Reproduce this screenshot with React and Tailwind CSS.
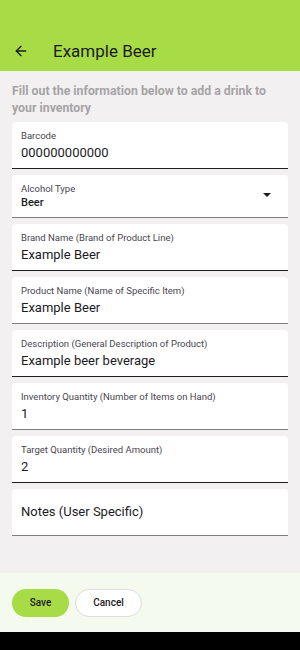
import { ArrowLeft } from "lucide-react";

const FONT = { fontFamily: "Roboto, 'Noto Sans', sans-serif" };

const fields = [
  { label: "Barcode", value: "000000000000", dark: true },
  { label: "Alcohol Type", value: "Beer", select: true },
  { label: "Brand Name (Brand of Product Line)", value: "Example Beer", dark: true },
  { label: "Product Name (Name of Specific Item)", value: "Example Beer" },
  { label: "Description (General Description of Product)", value: "Example beer beverage", dark: true },
  { label: "Inventory Quantity (Number of Items on Hand)", value: "1" },
  { label: "Target Quantity (Desired Amount)", value: "2", dark: true },
];

const Field = ({ label, value, dark, select }) => (
  <div
    className={`bg-white rounded-t-[4px] px-[9px] flex ${select ? "h-[43px]" : "h-[47px]"} ${
      dark ? "border-b border-[#1e1e1e]" : "border-b border-[#7d7d7d]"
    }`}
  >
    <div className="flex-1 flex flex-col pt-[8px]">
      <span className="text-[9.5px] leading-[12px] text-[#49454f]">{label}</span>
      {select ? (
        <span className="text-[11px] leading-[14px] font-medium text-[#1c1b1f] mt-[1px]">{value}</span>
      ) : (
        <span className="text-[13px] leading-[16px] text-[#1c1b1f] mt-[3px]">{value}</span>
      )}
    </div>
    {select && (
      <div className="flex items-center pr-[8px] pb-[2px]">
        <svg width="8" height="4" viewBox="0 0 8 4">
          <path d="M0 0 L8 0 L4 4 Z" fill="#1c1b1f" />
        </svg>
      </div>
    )}
  </div>
);

export default function App() {
  return (
    <div className="h-[650px] w-full flex flex-col bg-[#f2f0f1]" style={FONT}>
      <header className="h-[71px] bg-[#a8dc47] flex items-end pb-[8px] px-[13px]">
        <ArrowLeft className="w-[16px] h-[16px] text-[#1c1b1f] mb-[4px]" strokeWidth={2} />
        <h1 className="text-[17px] leading-[24px] text-[#1c1b1f] ml-[24px]">Example Beer</h1>
      </header>

      <main className="flex-1 px-[12px] pt-[12px]">
        <p className="text-[12.3px] leading-[17px] font-bold text-[#a6a4a6] mb-[5px]">
          Fill out the information below to add a drink to your inventory
        </p>
        <div className="flex flex-col gap-[6px]">
          {fields.map((f) => (
            <Field key={f.label} {...f} />
          ))}
          <div className="bg-white rounded-t-[4px] px-[9px] h-[47px] flex items-center border-b border-[#7d7d7d]">
            <span className="text-[13px] text-[#1c1b1f]">Notes (User Specific)</span>
          </div>
        </div>
      </main>

      <footer className="h-[59px] bg-[#f5faee] flex items-center gap-[6px] px-[12px]">
        <button className="h-[28px] w-[57px] rounded-full bg-[#a8dc47] text-[10px] font-medium text-[#1c1b1f]">
          Save
        </button>
        <button className="h-[28px] w-[67px] rounded-full bg-white border border-[#dcdcdc] text-[10px] font-medium text-[#1c1b1f]">
          Cancel
        </button>
      </footer>
      <div className="h-[18px] bg-black" />
    </div>
  );
}
